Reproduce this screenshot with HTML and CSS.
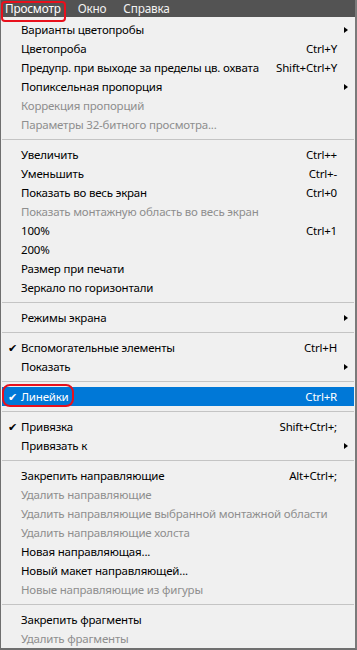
FILE: index.html
```html
<!DOCTYPE html>
<html lang="ru">
<head>
<meta charset="utf-8">
<title>Просмотр</title>
<link rel="stylesheet" href="styles.css">
</head>
<body>
<div class="frame">
  <div class="menubar">
    <span class="mb-item mb-active">Просмотр<span class="ring ring-bar"></span></span>
    <span class="mb-item">Окно</span>
    <span class="mb-item">Справка</span>
  </div>
  <ul class="menu">
    <li class="row"><span class="chk"></span><span class="lbl">Варианты цветопробы</span><span class="key"></span><span class="sub"><i class="arrow"></i></span></li>
    <li class="row"><span class="chk"></span><span class="lbl">Цветопроба</span><span class="key">Ctrl+Y</span><span class="sub"></span></li>
    <li class="row"><span class="chk"></span><span class="lbl">Предупр. при выходе за пределы цв. охвата</span><span class="key">Shift+Ctrl+Y</span><span class="sub"></span></li>
    <li class="row"><span class="chk"></span><span class="lbl">Попиксельная пропорция</span><span class="key"></span><span class="sub"><i class="arrow"></i></span></li>
    <li class="row off"><span class="chk"></span><span class="lbl">Коррекция пропорций</span><span class="key"></span><span class="sub"></span></li>
    <li class="row off"><span class="chk"></span><span class="lbl">Параметры 32-битного просмотра...</span><span class="key"></span><span class="sub"></span></li>
    <li class="sep"></li>
    <li class="row"><span class="chk"></span><span class="lbl">Увеличить</span><span class="key">Ctrl++</span><span class="sub"></span></li>
    <li class="row"><span class="chk"></span><span class="lbl">Уменьшить</span><span class="key">Ctrl+-</span><span class="sub"></span></li>
    <li class="row"><span class="chk"></span><span class="lbl">Показать во весь экран</span><span class="key">Ctrl+0</span><span class="sub"></span></li>
    <li class="row off"><span class="chk"></span><span class="lbl">Показать монтажную область во весь экран</span><span class="key"></span><span class="sub"></span></li>
    <li class="row"><span class="chk"></span><span class="lbl">100%</span><span class="key">Ctrl+1</span><span class="sub"></span></li>
    <li class="row"><span class="chk"></span><span class="lbl">200%</span><span class="key"></span><span class="sub"></span></li>
    <li class="row"><span class="chk"></span><span class="lbl">Размер при печати</span><span class="key"></span><span class="sub"></span></li>
    <li class="row"><span class="chk"></span><span class="lbl">Зеркало по горизонтали</span><span class="key"></span><span class="sub"></span></li>
    <li class="sep"></li>
    <li class="row"><span class="chk"></span><span class="lbl">Режимы экрана</span><span class="key"></span><span class="sub"><i class="arrow"></i></span></li>
    <li class="sep"></li>
    <li class="row"><span class="chk">✔</span><span class="lbl">Вспомогательные элементы</span><span class="key">Ctrl+H</span><span class="sub"></span></li>
    <li class="row"><span class="chk"></span><span class="lbl">Показать</span><span class="key"></span><span class="sub"><i class="arrow"></i></span></li>
    <li class="sep"></li>
    <li class="row sel"><span class="chk">✔</span><span class="lbl">Линейки</span><span class="key">Ctrl+R</span><span class="sub"></span><span class="ring ring-row"></span></li>
    <li class="sep"></li>
    <li class="row"><span class="chk">✔</span><span class="lbl">Привязка</span><span class="key">Shift+Ctrl+;</span><span class="sub"></span></li>
    <li class="row"><span class="chk"></span><span class="lbl">Привязать к</span><span class="key"></span><span class="sub"><i class="arrow"></i></span></li>
    <li class="sep"></li>
    <li class="row"><span class="chk"></span><span class="lbl">Закрепить направляющие</span><span class="key">Alt+Ctrl+;</span><span class="sub"></span></li>
    <li class="row off"><span class="chk"></span><span class="lbl">Удалить направляющие</span><span class="key"></span><span class="sub"></span></li>
    <li class="row off"><span class="chk"></span><span class="lbl">Удалить направляющие выбранной монтажной области</span><span class="key"></span><span class="sub"></span></li>
    <li class="row off"><span class="chk"></span><span class="lbl">Удалить направляющие холста</span><span class="key"></span><span class="sub"></span></li>
    <li class="row"><span class="chk"></span><span class="lbl">Новая направляющая...</span><span class="key"></span><span class="sub"></span></li>
    <li class="row"><span class="chk"></span><span class="lbl">Новый макет направляющей...</span><span class="key"></span><span class="sub"></span></li>
    <li class="row off"><span class="chk"></span><span class="lbl">Новые направляющие из фигуры</span><span class="key"></span><span class="sub"></span></li>
    <li class="sep"></li>
    <li class="row"><span class="chk"></span><span class="lbl">Закрепить фрагменты</span><span class="key"></span><span class="sub"></span></li>
    <li class="row off"><span class="chk"></span><span class="lbl">Удалить фрагменты</span><span class="key"></span><span class="sub"></span></li>
  </ul>
</div>
</body>
</html>
```
FILE: styles.css
```css
html, body {
  margin: 0;
  padding: 0;
  background: #f0f0f0;
}
body {
  font-family: "Noto Sans", "Open Sans", sans-serif;
  font-size: 11.5px;
  letter-spacing: -0.2px;
  color: #000;
}
.frame {
  width: 357px;
  height: 650px;
  box-sizing: border-box;
  border-left: 1px solid #6f6f6f;
  border-right: 2px solid #7a7a7a;
  border-bottom: 2px solid #6f6f6f;
  background: #f0f0f0;
  overflow: hidden;
}
.menubar {
  height: 17px;
  background: #535353;
  display: flex;
  align-items: center;
  padding-left: 4px;
  gap: 17px;
  color: #f2f2f2;
  line-height: 17px;
  font-size: 11.8px;
}
.mb-item {
  position: relative;
}
.mb-active {
  color: #fff;
}
.ring {
  position: absolute;
  border: 2px solid #e8101c;
  border-radius: 6px;
  pointer-events: none;
}
.ring-bar {
  left: -4px;
  top: 1px;
  right: -5px;
  height: 17px;
  border-radius: 4px;
}
.menu {
  list-style: none;
  margin: 0;
  padding: 3px 1px 0 1px;
}
.row {
  position: relative;
  display: grid;
  grid-template-columns: 19px 1fr auto 17px;
  align-items: center;
  height: 19px;
  line-height: 19px;
  white-space: nowrap;
}
.chk {
  font-size: 11px;
  text-align: center;
  padding-left: 2px;
}
.lbl {
  overflow: visible;
}
.key {
  text-align: right;
  padding-left: 6px;
}
.sub {
  display: flex;
  align-items: center;
  justify-content: center;
  padding-left: 1px;
}
.arrow {
  display: block;
  width: 0;
  height: 0;
  border-top: 3.5px solid transparent;
  border-bottom: 3.5px solid transparent;
  border-left: 4px solid #000;
}
.off {
  color: #8e8e8e;
}
.sel {
  background: #0078d7;
  color: #fff;
}
.ring-row {
  left: 0px;
  top: -3px;
  width: 72px;
  height: 23px;
  box-sizing: border-box;
  border-width: 2.5px;
  border-radius: 8px;
}
.sep {
  height: 11px;
  display: flex;
  align-items: center;
}
.sep::before {
  content: "";
  display: block;
  flex: 1;
  height: 1px;
  background: #c4c4c4;
}
```
